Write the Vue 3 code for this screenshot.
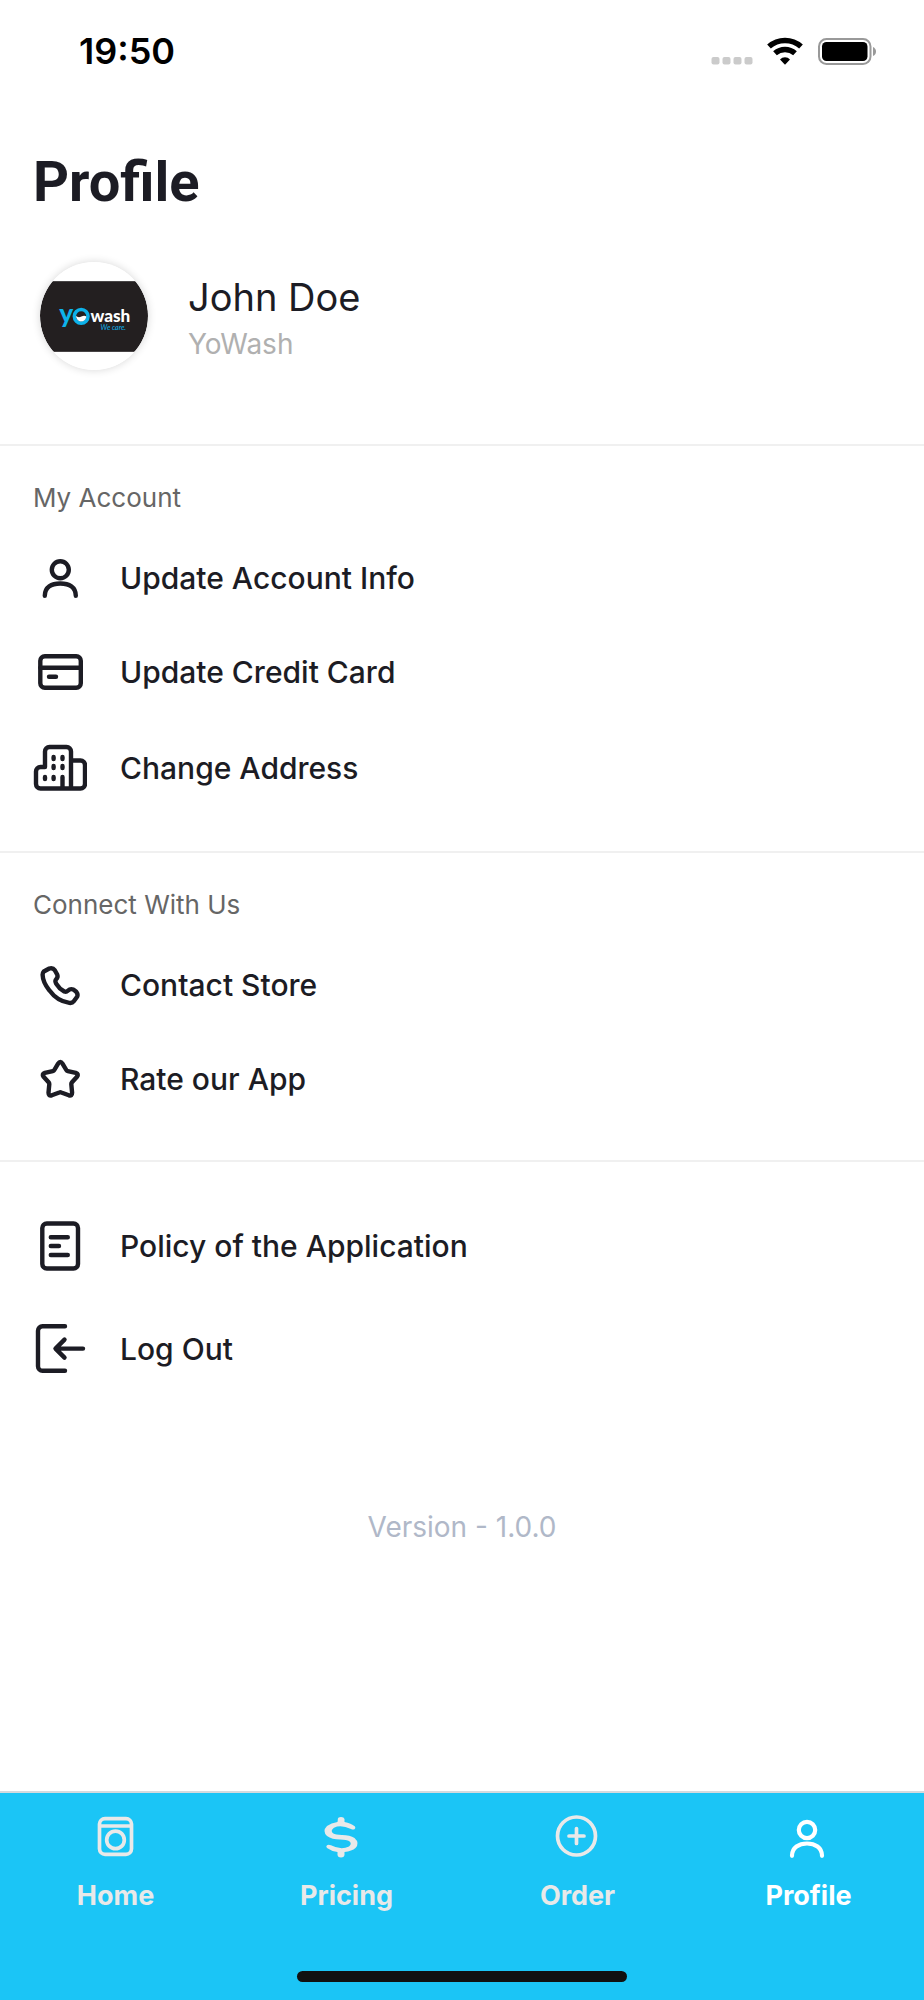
<script setup>
const accountItems = [
  { icon: 'user', label: 'Update Account Info' },
  { icon: 'card', label: 'Update Credit Card' },
  { icon: 'building', label: 'Change Address' },
]
const connectItems = [
  { icon: 'phone', label: 'Contact Store' },
  { icon: 'star', label: 'Rate our App' },
]
const otherItems = [
  { icon: 'doc', label: 'Policy of the Application' },
  { icon: 'logout', label: 'Log Out' },
]
const sections = [
  { title: 'My Account', items: accountItems },
  { title: 'Connect With Us', items: connectItems },
  { title: '', items: otherItems },
]
const iconHeights = { user: 54, card: 54, building: 58, phone: 54, star: 54, doc: 62, logout: 64 }
const iconShapes = {
  user: '<circle cx="27.300" cy="18.700" r="8.500"/><path d="M11.800 44.800C11.800 36 18.500 32.500 27.300 32.500S42.800 36 42.800 44.800"/>',
  card: '<rect x="7.300" y="11.300" width="40.500" height="31.500" rx="4.500"/><path d="M7.300 22.800H47.500M16 31.800H23"/>',
  building: '<path d="M38 49.500V12.500a4.500 4.500 0 0 0-4.500-4.500H16.500a4.500 4.500 0 0 0-4.500 4.500V28H7.500a4.500 4.500 0 0 0-4.500 4.500V45A4.500 4.500 0 0 0 7.500 49.500H47.500A4.500 4.500 0 0 0 52 45V26A4.500 4.500 0 0 0 47.500 21.500H38M29.500 49V38M20.600 18v2M29.500 18v2M20.600 27v2M29.500 27v2M20.600 38v2M12 38v2"/>',
  phone: '<path d="M10.800 13.500L16.300 10.500Q19.800 9.300 21.800 12.300L24.300 16.800Q25.300 19.300 22.800 21.800Q21.800 23.300 23.300 25.800Q26.300 30.800 31.300 33.500Q33.300 34.300 34.800 32.800Q37.300 30.300 40.300 31.500L43.300 33.800Q45.300 36.300 44.100 38.800L40.800 43.300Q39.300 45.300 36.300 44.900Q24.300 43.300 16.300 32.300Q9.800 24.300 9.600 16.800Q9.600 14.800 10.800 13.500Z"/>',
  star: '<path d="M25.100 11.600Q27.300 8.100 29.500 11.600L33.300 18Q33.800 18.900 34.800 19.100L42.800 20.900Q46.100 22.100 44 24.800L39 30.300Q38.300 31.100 38.300 32.100L39.100 40.800Q39.100 44.300 35.800 43.300L28.300 40.500Q27.300 40.100 26.300 40.500L18.800 43.300Q15.500 44.300 15.500 40.800L16.300 32.100Q16.300 31.100 15.600 30.300L10.600 24.800Q8.500 22.100 11.800 20.900L19.800 19.100Q20.800 18.900 21.300 18Z"/>',
  doc: '<rect x="9.300" y="8.500" width="35.700" height="45" rx="4.500"/><path d="M17.800 22.200H34.800M17.800 31H26M17.800 40H34.800"/>',
  logout: '<path d="M32 9.300H9.500A4.500 4.500 0 0 0 5 13.800V49.300A4.500 4.500 0 0 0 9.500 53.800H32M50 31.600H23M31.500 22.600L22.500 31.600L31.500 40.600"/>',
}
const tabs = [
  { icon: 'washer', label: 'Home' },
  { icon: 'dollar', label: 'Pricing' },
  { icon: 'plus', label: 'Order' },
  { icon: 'person', label: 'Profile', active: true },
]
</script>

<template>
  <div class="screen">
    <header class="status">
      <time class="clock">19:50</time>
      <svg class="indicators" width="166" height="30" viewBox="0 0 166 30" aria-hidden="true">
        <g fill="#cbcbcb">
          <rect x="1.500" y="21" width="8" height="7.500" rx="2" />
          <rect x="12.500" y="21" width="8" height="7.500" rx="2" />
          <rect x="23.500" y="21" width="8" height="7.500" rx="2" />
          <rect x="34.500" y="21" width="8" height="7.500" rx="2" />
        </g>
        <g fill="none" stroke="#000" stroke-width="5.500">
          <path d="M59 10.500A24 24 0 0 1 91 10.500" />
          <path d="M65 17.300A15 15 0 0 1 85 17.300" />
        </g>
        <path d="M75 28.800L70 23.400A7 7 0 0 1 80 23.400Z" />
        <rect x="109" y="3" width="51.500" height="25" rx="7.500" fill="none" stroke="#999" stroke-width="2" />
        <rect x="112" y="6" width="45.500" height="19" rx="4.500" />
        <path d="M163 11Q166 12.500 166 15.500T163 20Z" fill="#999" />
      </svg>
    </header>

    <main class="content">
      <h1 class="title">Profile</h1>
      <div class="person">
        <svg class="avatar" viewBox="0 0 107 107" role="img" aria-label="YoWash logo">
          <defs><clipPath id="round"><circle cx="53.500" cy="53.500" r="53.500" /></clipPath></defs>
          <g clip-path="url(#round)">
            <rect width="107" height="107" fill="#fff" />
            <rect y="19" width="107" height="70" fill="#231f20" />
          </g>
          <text class="brand" x="19" y="60">y</text>
          <circle cx="40.800" cy="53.800" r="6.800" fill="none" stroke="#0db2ea" stroke-width="3.500" />
          <path d="M35.500 53.500Q38 55.500 41 54Q44 52.500 46 54Q45 59 40.500 59Q36.500 58.500 35.500 53.500Z" fill="#fff" />
          <text class="brand-wash" x="50" y="59">wash</text>
          <text class="brand-tag" x="60" y="67">We care.</text>
        </svg>
        <div class="names">
          <p class="name">John Doe</p>
          <p class="company">YoWash</p>
        </div>
      </div>

      <section v-for="(s, i) in sections" :key="i" class="group">
        <h2 v-if="s.title" class="group-title">{{ s.title }}</h2>
        <ul class="list" :class="{ untitled: !s.title }">
          <li v-for="item in s.items" :key="item.label">
            <button type="button" class="row">
              <svg
                class="row-icon"
                width="54"
                :height="iconHeights[item.icon]"
                :viewBox="`0 0 54 ${iconHeights[item.icon]}`"
                aria-hidden="true"
                v-html="iconShapes[item.icon]"
              />
              <span>{{ item.label }}</span>
            </button>
          </li>
        </ul>
      </section>
      <p class="version">Version - 1.0.0</p>
    </main>

    <nav class="tabs">
      <a v-for="t in tabs" :key="t.label" href="#" class="tab" :class="{ active: t.active }">
        <svg class="tab-icon" width="54" height="50" viewBox="0 0 54 50" aria-hidden="true">
          <g v-if="t.icon === 'washer'">
            <rect x="10.500" y="7.600" width="32" height="35.700" rx="5.500" />
            <path d="M11 15H42" />
            <circle cx="26.500" cy="28.900" r="8.800" />
          </g>
          <g v-else-if="t.icon === 'dollar'">
            <path class="solid" d="M17.800 9V8Q18 6 21 6T24.500 8V11Q31 12 35 15.500Q36 17 34.500 18.200Q33 19 31 18Q21 13.500 14 16.700Q10 19.500 13 22.300Q15.500 24 22 24Q30 24 34.500 27Q40 32 35.500 37Q32 40 24.500 41V44Q24 46.500 21 46.500T17.500 44V41Q11 40 7 37Q5.500 35.500 7 34.200Q8.500 33.200 11 34.300Q21 39.500 29 35.500Q32.500 32.500 29 30Q27 28.600 20 28.500Q12 28.500 7 25Q2 20 7 15Q11 12 17.500 11Z" />
          </g>
          <g v-else-if="t.icon === 'plus'">
            <circle cx="25.500" cy="25" r="19" />
            <path d="M18 25H33M25.500 17.500V32.500" />
          </g>
          <g v-else class="thick">
            <circle cx="25" cy="19" r="8.200" />
            <path d="M10 44.800C10 36.500 17 32.500 25 32.500S40 36.500 40 44.800" />
          </g>
        </svg>
        <span>{{ t.label }}</span>
      </a>
      <div class="home-indicator"></div>
    </nav>
  </div>
</template>

<style>
body {
  background: #fff;
}
</style>

<style scoped>
.screen {
  display: flex;
  flex-direction: column;
  min-height: 100vh;
  background: #fff;
  color: #1c1c24;
  font-family: Inter, 'Liberation Sans', sans-serif;
}

.status {
  display: flex;
  justify-content: space-between;
  align-items: center;
  height: 101px;
  padding: 0 48px 0 79px;
}

.clock {
  color: #000;
  font-size: 36px;
  font-weight: 600;
  line-height: 42px;
}

.indicators {
  flex: none;
}

.content {
  flex: 1;
}

.title {
  margin: 48px 33px 0;
  font: 700 56px/66px Roboto, 'Liberation Sans', sans-serif;
}

.person {
  display: flex;
  align-items: center;
  gap: 40px;
  padding: 47px 40px 74px;
}

.avatar {
  flex: none;
  width: 108px;
  height: 108px;
  border-radius: 50%;
  box-shadow: 0 0 8px rgba(0, 0, 0, 0.16);
}

.brand {
  fill: #0db2ea;
  font: 900 26px Lato, sans-serif;
}

.brand-wash {
  fill: #fff;
  font: 900 17px Lato, sans-serif;
}

.brand-tag {
  fill: #0db2ea;
  font: italic 400 7px Lato, sans-serif;
}

.names {
  padding-top: 4px;
}

.name,
.company {
  margin: 0;
}

.name {
  font-size: 38px;
  line-height: 52px;
}

.company {
  color: #b0b0b0;
  font-size: 28px;
  line-height: 42px;
}

.group {
  border-top: 2px solid #f0f0f0;
  padding-bottom: 34px;
}

.group-title {
  margin: 0 33px;
  padding: 33px 0 14px;
  color: #666;
  font-size: 26px;
  font-weight: 400;
  line-height: 38px;
}

.list {
  margin: 0;
  padding: 0;
  list-style: none;
}

.list.untitled {
  padding-top: 33px;
}

.row {
  display: flex;
  align-items: center;
  gap: 33px;
  width: 100%;
  padding: 20px 33px;
  border: 0;
  background: none;
  color: inherit;
  font: 500 30px/38px Inter, 'Liberation Sans', sans-serif;
  text-align: left;
}

.row-icon {
  flex: none;
  fill: none;
  stroke: #1c1c24;
  stroke-width: 4.400;
  stroke-linecap: round;
  stroke-linejoin: round;
}

.version {
  margin: 73px 0 0;
  color: #b0b8c8;
  font-size: 28px;
  line-height: 38px;
  text-align: center;
}

.tabs {
  display: grid;
  grid-template-columns: repeat(4, 1fr);
  border-top: 2px solid #d4dade;
  background: #1bc5f6;
}

.tab {
  display: flex;
  flex-direction: column;
  align-items: center;
  gap: 17px;
  padding-top: 18px;
  color: #e9e9e9;
  font-size: 27px;
  font-weight: 700;
  line-height: 36px;
  text-decoration: none;
}

.tab.active {
  color: #fff;
}

.tab-icon {
  fill: none;
  stroke: currentColor;
  stroke-width: 3.700;
  stroke-linecap: round;
}

.solid {
  fill: currentColor;
  stroke: none;
}

.thick {
  stroke-width: 4.200;
}

.home-indicator {
  grid-column: 1 / -1;
  justify-self: center;
  width: 330px;
  height: 11px;
  margin: 57px 0 18px;
  border-radius: 6px;
  background: #111;
}
</style>
